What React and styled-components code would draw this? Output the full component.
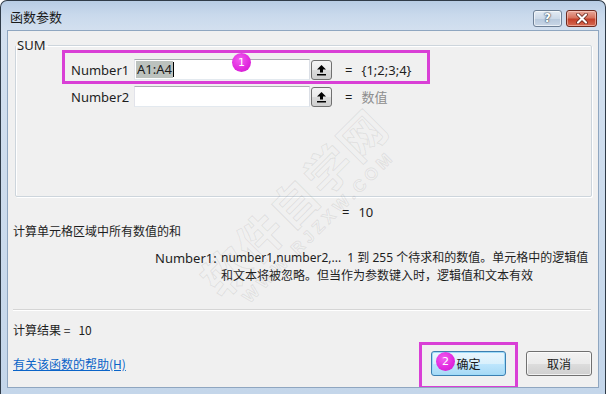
import React from "react"
import styled, { createGlobalStyle } from "styled-components"

const GlobalStyle = createGlobalStyle`
  html, body {
    margin: 0;
    padding: 0;
    background: #ffffff;
  }
  body {
    font-family: "Noto Sans", "Noto Sans CJK SC", sans-serif;
    font-size: 12px;
    color: #1e1e1e;
  }
`

function UpIcon() {
    return (
        <svg width="11" height="12" viewBox="0 0 11 12">
            <polygon points="5.5,1 10,5.5 1,5.5" fill="#000" />
            <rect x="4" y="5" width="3" height="3.5" fill="#000" />
            <rect x="1" y="10" width="9" height="1.5" fill="#000" />
        </svg>
    )
}

function CloseIcon() {
    return (
        <svg width="12" height="11" viewBox="0 0 12 11">
            <path d="M2 1.5 L10 9.5 M10 1.5 L2 9.5" stroke="#5a1b12" strokeWidth="3.6" strokeLinecap="round" />
            <path d="M2 1.5 L10 9.5 M10 1.5 L2 9.5" stroke="#ffffff" strokeWidth="2.2" strokeLinecap="round" />
        </svg>
    )
}

export default function App() {
    return (
        <>
            <GlobalStyle />
            <Window>
                <TitleBar>
                    <Title>函数参数</Title>
                    <CaptionButtons>
                        <HelpButton>?</HelpButton>
                        <CloseButton><CloseIcon /></CloseButton>
                    </CaptionButtons>
                </TitleBar>
                <Client>
                    <GroupBox>
                        <Legend>SUM</Legend>
                        <ArgList>
                            <ArgRow>
                                <ArgLabel>Number1</ArgLabel>
                                <ArgInput>
                                    <Selected>A1:A4</Selected>
                                    <Caret />
                                </ArgInput>
                                <RefButton><UpIcon /></RefButton>
                                <Equals>=</Equals>
                                <ArgValue>{"{1;2;3;4}"}</ArgValue>
                                <Highlight $left={-9} $top={-9} $width={368} $height={34} />
                                <Badge $left={161} $top={-6}>1</Badge>
                            </ArgRow>
                            <ArgRow>
                                <ArgLabel>Number2</ArgLabel>
                                <ArgInput />
                                <RefButton><UpIcon /></RefButton>
                                <Equals>=</Equals>
                                <ArgValue $muted>数值</ArgValue>
                            </ArgRow>
                        </ArgList>
                    </GroupBox>

                    <ResultLine>
                        <Equals>=</Equals>
                        <span>10</span>
                    </ResultLine>
                    <Description>计算单元格区域中所有数值的和</Description>
                    <HelpBlock>
                        <HelpName>Number1:</HelpName>
                        <HelpText>
                            number1,number2,...&nbsp; 1 到 255 个待求和的数值。单元格中的逻辑值<br />
                            和文本将被忽略。但当作为参数键入时，逻辑值和文本有效
                        </HelpText>
                    </HelpBlock>
                    <Separator />
                    <FormulaResult>计算结果 =&nbsp;&nbsp; 10</FormulaResult>
                    <Footer>
                        <HelpLink href="#">有关该函数的帮助(H)</HelpLink>
                        <Buttons>
                            <DialogButton $default>确定</DialogButton>
                            <DialogButton>取消</DialogButton>
                        </Buttons>
                        <Highlight $left={406} $top={-9} $width={99} $height={47} />
                        <Badge $left={423} $top={1}>2</Badge>
                    </Footer>

                    <Watermark>
                        <WatermarkBig>软件自学网</WatermarkBig>
                        <WatermarkSmall>WWW.RJZXW.COM</WatermarkSmall>
                    </Watermark>
                </Client>
            </Window>
        </>
    )
}

const Window = styled.div`
width: 606px;
height: 394px;
box-sizing: border-box;
border: 1px solid #2f3b48;
border-bottom: none;
border-radius: 7px 7px 0 0;
background: linear-gradient(180deg, #b7cce4 0px, #c9d9ec 14px, #d3e0ef 30px, #c4d6ea 100%);
display: flex;
flex-direction: column;
padding: 0 6px 6px 6px;
overflow: hidden;
`

const TitleBar = styled.div`
height: 29px;
display: flex;
align-items: center;
justify-content: space-between;
padding-left: 3px;
`

const Title = styled.div`
font-family: "Noto Sans CJK SC", sans-serif;
font-size: 13px;
color: #1a1a1a;
margin-top: 2px;
`

const CaptionButtons = styled.div`
display: flex;
gap: 4px;
align-self: flex-start;
margin-top: 9px;
margin-right: 2px;
`

const HelpButton = styled.div`
width: 29px;
height: 17px;
box-sizing: border-box;
border: 1px solid #6d7f95;
border-radius: 3px;
background: linear-gradient(180deg, #e3ebf4 0%, #ccd9e8 50%, #b7c8dc 51%, #c9d7e7 100%);
box-shadow: inset 0 0 0 1px rgba(255,255,255,0.6);
font-family: "DejaVu Sans", sans-serif;
font-weight: bold;
font-size: 12px;
line-height: 15px;
text-align: center;
color: #ffffff;
text-shadow: 0 0 2px #203040, 0 0 1px #203040;
`

const CloseButton = styled.div`
width: 31px;
height: 17px;
box-sizing: border-box;
border: 1px solid #6e2a20;
border-radius: 3px;
background: linear-gradient(180deg, #e9a99c 0%, #d7735e 45%, #c4402a 55%, #d66a52 100%);
box-shadow: inset 0 0 0 1px rgba(255,220,210,0.5);
display: flex;
align-items: center;
justify-content: center;
`

const Client = styled.div`
position: relative;
flex: 1;
background: #f0f0f0;
border: 1px solid #8fa6c0;
display: flex;
flex-direction: column;
padding: 0 6px 0 5px;
overflow: hidden;
`

const GroupBox = styled.fieldset`
margin: 6px 0 0 2px;
height: 160px;
box-sizing: border-box;
border: 1px solid #cdd5dc;
box-shadow: inset 1px 1px 0 #ffffff, 1px 1px 0 #ffffff;
border-radius: 2px;
padding: 0;
`

const Legend = styled.legend`
font-size: 13px;
line-height: 16px;
padding: 0 3px 0 1px;
margin-left: 0;
color: #1e1e1e;
`

const ArgList = styled.div`
padding: 6px 0 0 55px;
`

const ArgRow = styled.div`
position: relative;
display: flex;
align-items: center;
height: 21px;
margin-bottom: 6px;
`

const ArgLabel = styled.div`
width: 63px;
font-size: 13px;
color: #1e1e1e;
`

const ArgInput = styled.div`
width: 176px;
height: 21px;
box-sizing: border-box;
background: #ffffff;
border: 1px solid #abadb3;
border-left-color: #e2e3ea;
border-right-color: #dbdfe6;
border-bottom-color: #e3e9ef;
display: flex;
align-items: center;
padding-left: 1px;
font-size: 13px;
`

const Selected = styled.span`
background: #bcc2be;
color: #1a1a1a;
line-height: 17px;
padding: 0 1px;
`

const Caret = styled.span`
width: 1px;
height: 15px;
background: #000;
`

const RefButton = styled.div`
width: 21px;
height: 20px;
box-sizing: border-box;
margin-left: 1px;
border: 1px solid #707070;
border-radius: 3px;
background: linear-gradient(180deg, #f4f4f4 0%, #ebebeb 50%, #dcdcdc 51%, #cfcfcf 100%);
display: flex;
align-items: center;
justify-content: center;
`

const Equals = styled.span`
font-size: 13px;
margin-left: 13px;
margin-right: 9px;
color: #1e1e1e;
`

const ArgValue = styled.span`
font-size: 13px;
color: ${p => (p.$muted ? "#8d8d8d" : "#1e1e1e")};
`

const Highlight = styled.div`
position: absolute;
left: ${p => p.$left}px;
top: ${p => p.$top}px;
width: ${p => p.$width}px;
height: ${p => p.$height}px;
box-sizing: border-box;
border: 3px solid #d93fd6;
pointer-events: none;
`

const Badge = styled.div`
position: absolute;
left: ${p => p.$left}px;
top: ${p => p.$top}px;
width: 19px;
height: 19px;
border-radius: 50%;
background: radial-gradient(circle at 40% 35%, #f25cf0 0%, #e027de 60%, #c81fc6 100%);
color: #ffffff;
font-family: "DejaVu Sans", sans-serif;
font-size: 11px;
line-height: 19px;
text-align: center;
`

const ResultLine = styled.div`
display: flex;
align-items: center;
margin: 7px 0 0 329px;
height: 16px;
font-size: 13px;
& ${Equals} {
    margin-left: 0;
    margin-right: 9px;
}
`

const Description = styled.div`
margin-top: 3px;
font-family: "Noto Sans CJK SC", sans-serif;
font-size: 12px;
line-height: 16px;
`

const HelpBlock = styled.div`
display: flex;
margin-top: 10px;
padding-left: 142px;
font-size: 12px;
line-height: 18px;
`

const HelpName = styled.div`
width: 66px;
font-size: 13px;
`

const HelpText = styled.div`
font-size: 12px;
`

const Separator = styled.div`
margin: 24px 1px 0 0;
height: 1px;
background: #d5d5d5;
box-shadow: 0 1px 0 #ffffff;
`

const FormulaResult = styled.div`
margin-top: 12px;
font-family: "Noto Sans CJK SC", sans-serif;
font-size: 12px;
line-height: 16px;
`

const Footer = styled.div`
position: relative;
display: flex;
align-items: center;
justify-content: space-between;
margin-top: 13px;
height: 25px;
`

const HelpLink = styled.a`
font-family: "Noto Sans CJK SC", sans-serif;
font-size: 12px;
color: #0a64c8;
text-decoration: underline;
`

const Buttons = styled.div`
display: flex;
gap: 20px;
`

const DialogButton = styled.div`
width: ${p => (p.$default ? "75px" : "66px")};
height: 25px;
box-sizing: border-box;
border: 1px solid ${p => (p.$default ? "#3c7fb1" : "#707070")};
border-radius: 3px;
background: ${p => (p.$default
        ? "linear-gradient(180deg, #eaf6fd 0%, #d9f0fc 50%, #bee6fd 51%, #a7d9f5 100%)"
        : "linear-gradient(180deg, #f2f2f2 0%, #ebebeb 50%, #dddddd 51%, #cfcfcf 100%)")};
box-shadow: inset 0 0 0 1px ${p => (p.$default ? "#9fdbf9" : "rgba(255,255,255,0.7)")};
display: flex;
align-items: center;
justify-content: center;
font-family: "Noto Sans CJK SC", sans-serif;
font-size: 12px;
color: #1a1a1a;
`

const Watermark = styled.div`
position: absolute;
left: 150px;
top: 135px;
width: 280px;
transform: rotate(-45deg);
transform-origin: center;
display: flex;
flex-direction: column;
align-items: center;
pointer-events: none;
`

const WatermarkBig = styled.div`
font-family: "Noto Sans CJK SC", sans-serif;
font-size: 46px;
font-weight: 700;
letter-spacing: 2px;
color: transparent;
-webkit-text-stroke: 1px rgba(90, 90, 90, 0.11);
`

const WatermarkSmall = styled.div`
font-family: "Liberation Sans", sans-serif;
font-size: 17px;
font-weight: 700;
letter-spacing: 4px;
color: transparent;
-webkit-text-stroke: 1px rgba(90, 90, 90, 0.11);
margin-top: -6px;
`
